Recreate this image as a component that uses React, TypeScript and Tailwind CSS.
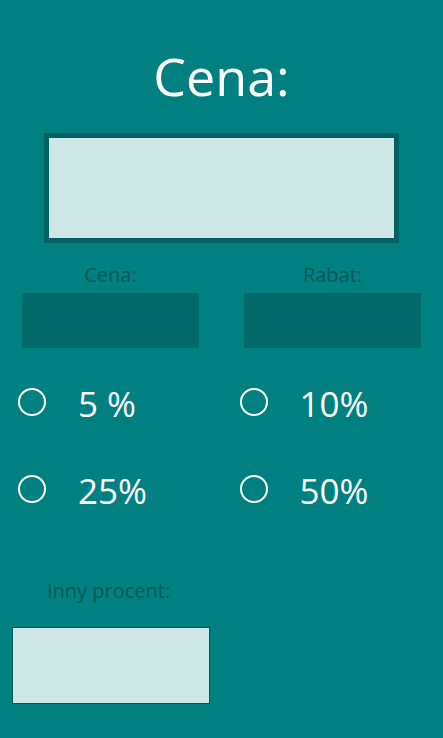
import React from "react";

const font = { fontFamily: '"Open Sans", "Noto Sans", sans-serif' };

function Radio({ label }: { label: string }) {
  return (
    <div className="flex items-start pl-[18px]">
      <div className="mt-[2px] w-[28px] h-[28px] rounded-full border-[2.5px] border-white shrink-0" />
      <span className="ml-[32px] text-[35px] leading-none font-[370] text-white">{label}</span>
    </div>
  );
}

export default function App() {
  return (
    <div
      className="w-[443px] h-[738px] bg-[#008080] flex flex-col overflow-hidden"
      style={font}
    >
      <div className="pt-[50px] text-[52px] leading-none font-[370] text-white text-center">Cena:</div>

      <div className="mt-[31px] mx-auto w-[355px] h-[110px] border-[5px] border-[#006262] bg-[#cde6e6]" />

      <div className="mt-[22px] px-[22px] grid grid-cols-2 gap-x-[45px]">
        <div className="flex flex-col items-center">
          <div className="text-[20px] leading-none text-[#005a5a]">Cena:</div>
          <div className="mt-[8px] w-full h-[55px] bg-[#006a6a]" />
        </div>
        <div className="flex flex-col items-center">
          <div className="text-[20px] leading-none text-[#005a5a]">Rabat:</div>
          <div className="mt-[8px] w-full h-[55px] bg-[#006a6a]" />
        </div>
      </div>

      <div className="mt-[38px] grid grid-cols-2 gap-y-[52px]">
        <Radio label="5 %" />
        <Radio label="10%" />
        <Radio label="25%" />
        <Radio label="50%" />
      </div>

      <div className="mt-[73px] pl-[47px] text-[20px] leading-none text-[#005a5a]">Inny procent:</div>

      <div className="mt-[26px] ml-[12px] w-[198px] h-[77px] border border-[#005c5c] bg-[#cde6e6]" />
    </div>
  );
}
